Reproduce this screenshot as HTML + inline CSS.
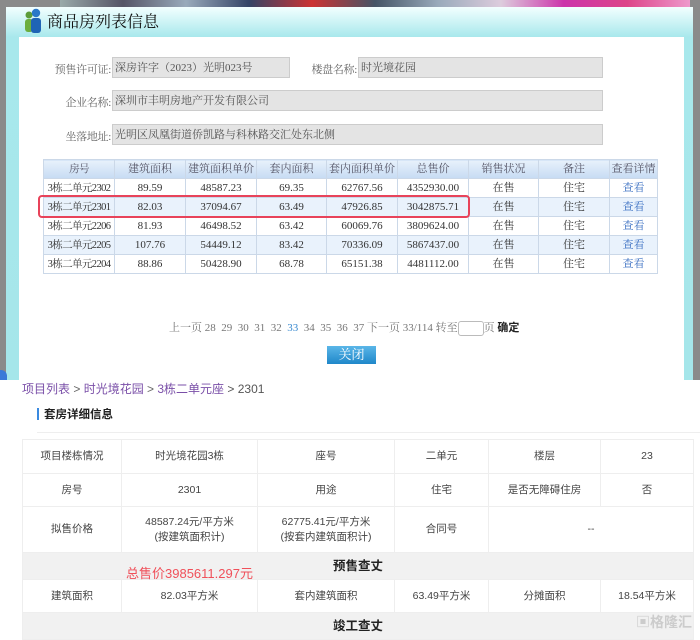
<!DOCTYPE html>
<html><head><meta charset="utf-8"><style>
*{margin:0;padding:0;box-sizing:border-box}
body{width:700px;height:637px;background:#fff;position:relative;overflow:hidden;font-family:"Liberation Serif","Noto Serif CJK SC",serif;}
.abs{position:absolute;white-space:nowrap}
#top{left:0;top:0;width:700px;height:380px;background:#8a8a8a}
#strip{left:60px;top:0;width:630px;height:7px;background:linear-gradient(90deg,#9aa 0%,#556 10%,#9ab 20%,#346 30%,#c33 40%,#456 50%,#9ab 60%,#dcd 70%,#c3a 80%,#d48 90%,#e9c 100%)}
#cyan{left:6px;top:7px;width:687px;height:373px;background:linear-gradient(#f2ffff,#a8e8ec 30px,#a5e6ea)}
#white{left:19px;top:37px;width:665px;height:343px;background:#fff}
.lbl{font-size:11px;color:#666;text-align:right;width:80px;letter-spacing:-0.3px}
.fld{background:#e4e4e4;border:1px solid #ccc;font-size:11px;color:#555;padding:3px 2px;height:21px;line-height:14px}
table{border-collapse:collapse;table-layout:fixed}
#t1{left:43px;top:159px;width:615px;font-size:11px;color:#333}
#t1 td{border:1px solid #cbd8e8;text-align:center;height:19px;padding:0;white-space:nowrap;overflow:hidden;line-height:17px}
#t1 td:first-child{font-size:10.5px;letter-spacing:-0.6px}
#t1 tr.h td{background:linear-gradient(#e8f1fb,#c6dbf3);color:#556}
#t1 tr.a td{background:#e9f2fc}
#t1 a{color:#3a6fc2;text-decoration:none}
#t2{left:22px;top:439px;width:672px;font-family:"Liberation Sans","Noto Sans CJK SC",sans-serif;font-size:10.5px;color:#444}
#t2 td{border:1px solid #eee;text-align:center;padding:0;line-height:15px}
#t2 tr.g td{background:#f1f1f1;font-weight:bold;font-size:12.5px;color:#222}
</style></head><body>
<div id="top" class="abs"></div>
<div id="strip" class="abs"></div>
<div id="cyan" class="abs"></div>
<div id="white" class="abs"></div>
<svg class="abs" style="left:22px;top:8px" width="22" height="26" viewBox="0 0 22 26"><circle cx="7" cy="7" r="3.5" fill="#5c9c3a"/><rect x="3" y="11" width="8" height="13" rx="3" fill="#6cae3e"/><circle cx="14" cy="5" r="4.2" fill="#2a78c8"/><rect x="9" y="10" width="10" height="15" rx="3" fill="#1f64b5"/></svg>
<div class="abs" style="left:47px;top:9px;font-size:16px;color:#111">商品房列表信息</div>
<div class="abs lbl" style="left:31px;top:61px">预售许可证:</div>
<div class="abs fld" style="left:112px;top:57px;width:178px">深房许字（2023）光明023号</div>
<div class="abs lbl" style="left:277px;top:61px">楼盘名称:</div>
<div class="abs fld" style="left:358px;top:57px;width:245px">时光境花园</div>
<div class="abs lbl" style="left:31px;top:94px">企业名称:</div>
<div class="abs fld" style="left:112px;top:90px;width:491px">深圳市丰明房地产开发有限公司</div>
<div class="abs lbl" style="left:31px;top:128px">坐落地址:</div>
<div class="abs fld" style="left:112px;top:124px;width:491px">光明区凤凰街道侨凯路与科林路交汇处东北侧</div>
<table id="t1" class="abs">
<tr class="h"><td style="width:71px">房号</td><td style="width:71px">建筑面积</td><td style="width:71px">建筑面积单价</td><td style="width:70px">套内面积</td><td style="width:71px">套内面积单价</td><td style="width:71px">总售价</td><td style="width:70px">销售状况</td><td style="width:71px">备注</td><td>查看详情</td></tr>
<tr><td>3栋二单元2302</td><td>89.59</td><td>48587.23</td><td>69.35</td><td>62767.56</td><td>4352930.00</td><td>在售</td><td>住宅</td><td><a>查看</a></td></tr>
<tr class="a"><td>3栋二单元2301</td><td>82.03</td><td>37094.67</td><td>63.49</td><td>47926.85</td><td>3042875.71</td><td>在售</td><td>住宅</td><td><a>查看</a></td></tr>
<tr><td>3栋二单元2206</td><td>81.93</td><td>46498.52</td><td>63.42</td><td>60069.76</td><td>3809624.00</td><td>在售</td><td>住宅</td><td><a>查看</a></td></tr>
<tr class="a"><td>3栋二单元2205</td><td>107.76</td><td>54449.12</td><td>83.42</td><td>70336.09</td><td>5867437.00</td><td>在售</td><td>住宅</td><td><a>查看</a></td></tr>
<tr><td>3栋二单元2204</td><td>88.86</td><td>50428.90</td><td>68.78</td><td>65151.38</td><td>4481112.00</td><td>在售</td><td>住宅</td><td><a>查看</a></td></tr>
</table>
<div class="abs" style="left:38px;top:195px;width:432px;height:23px;border:2.5px solid #e8435a;border-radius:4px"></div>
<div class="abs" style="left:169px;top:319px;font-size:11px;color:#777">上一页 28&nbsp; 29&nbsp; 30&nbsp; 31&nbsp; 32&nbsp; <span style="color:#3a8ad0">33</span>&nbsp; 34&nbsp; 35&nbsp; 36&nbsp; 37 下一页 33/114 转至<span style="display:inline-block;width:26px;height:15px;border:1px solid #bbb;border-radius:3px;vertical-align:middle"></span>页 <b style="color:#222;font-family:'Liberation Sans','Noto Sans CJK SC',sans-serif">确定</b></div>
<div class="abs" style="left:327px;top:346px;width:49px;height:18px;background:linear-gradient(#5ab6e8,#1f87c9);color:#fff;font-size:13px;text-align:center;line-height:18px">关闭</div>
<div class="abs" style="left:0;top:370px;width:7px;height:10px;background:#3a7ad8;border-radius:0 6px 0 0"></div>
<div class="abs" style="left:22px;top:380px;font-family:'Liberation Sans','Noto Sans CJK SC',sans-serif;font-size:12px;color:#7a4fa8">项目列表 <span style="color:#666">&gt;</span> 时光境花园 <span style="color:#666">&gt;</span> 3栋二单元座 <span style="color:#555">&gt; 2301</span></div>
<div class="abs" style="left:37px;top:408px;width:2px;height:12px;background:#3a8ae0"></div>
<div class="abs" style="left:44px;top:406px;font-family:'Liberation Sans','Noto Sans CJK SC',sans-serif;font-size:11.5px;font-weight:bold;color:#222">套房详细信息</div>
<div class="abs" style="left:37px;top:432px;width:663px;height:1px;background:#eee"></div>
<table id="t2" class="abs">
<tr style="height:34px"><td style="width:99px">项目楼栋情况</td><td style="width:136px">时光境花园3栋</td><td style="width:137px">座号</td><td style="width:94px">二单元</td><td style="width:112px">楼层</td><td>23</td></tr>
<tr style="height:33px"><td>房号</td><td>2301</td><td>用途</td><td>住宅</td><td>是否无障碍住房</td><td>否</td></tr>
<tr style="height:46px"><td>拟售价格</td><td>48587.24元/平方米<br>(按建筑面积计)</td><td>62775.41元/平方米<br>(按套内建筑面积计)</td><td>合同号</td><td colspan="2">--</td></tr>
<tr class="g" style="height:27px"><td colspan="6">预售查丈</td></tr>
<tr style="height:33px"><td>建筑面积</td><td>82.03平方米</td><td>套内建筑面积</td><td>63.49平方米</td><td>分摊面积</td><td>18.54平方米</td></tr>
<tr class="g" style="height:27px"><td colspan="6">竣工查丈</td></tr>
</table>
<div class="abs" style="left:126px;top:563px;font-family:'Liberation Sans','Noto Sans CJK SC',sans-serif;font-size:13px;color:#f0505a">总售价3985611.297元</div>
<div class="abs" style="left:636px;top:612px;font-family:'Liberation Sans','Noto Sans CJK SC',sans-serif;font-size:14px;color:#ccc;font-weight:bold">▣格隆汇</div>
</body></html>
